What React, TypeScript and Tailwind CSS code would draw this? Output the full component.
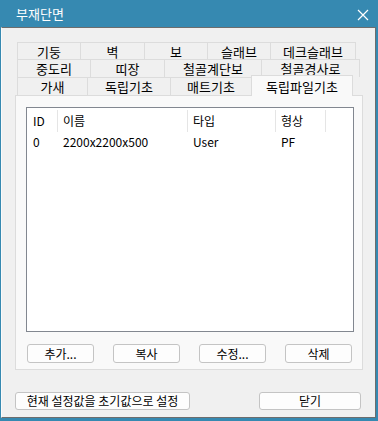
import React from 'react';

const font = { fontFamily: '"Noto Sans CJK KR", "Liberation Sans", sans-serif' };

const row1 = [
  { label: '기둥', w: 'w-[64px]' },
  { label: '벽', w: 'w-[65px]' },
  { label: '보', w: 'w-[64px]' },
  { label: '슬래브', w: 'w-[64px]' },
  { label: '데크슬래브', w: 'w-[86px]' },
];

const row2 = [
  { label: '중도리', w: 'w-[74px]' },
  { label: '띠장', w: 'w-[75px]' },
  { label: '철골계단보', w: 'w-[98px]' },
  { label: '철골경사로', w: 'w-[99px]' },
];

const row3 = [
  { label: '가새', w: 'w-[71px]' },
  { label: '독립기초', w: 'w-[84px]' },
  { label: '매트기초', w: 'w-[82px]' },
];

function Tab({ label, w, h = 'h-[18px]' }: { label: string; w: string; h?: string }) {
  return (
    <div
      className={`${w} ${h} shrink-0 flex items-center justify-center border-t border-l border-r border-[#dcdcdc] bg-[#f0f0f0] text-[13px] leading-none text-black -mr-[1px]`}
    >
      {label}
    </div>
  );
}

function Btn({ label, w, h = 'h-[19px]' }: { label: string; w: string; h?: string }) {
  return (
    <div
      className={`${w} ${h} flex items-center justify-center rounded-[3px] border border-[#c4c4c4] bg-[#fdfdfd] text-[12px] leading-none text-black`}
    >
      {label}
    </div>
  );
}

export default function App() {
  return (
    <div className="w-[378px] h-[421px] bg-[#3689b1] flex flex-col select-none" style={font}>
      {/* title bar */}
      <div className="h-[27px] shrink-0 flex items-center justify-between pl-[16px] pr-[9px]">
        <span className="text-[13px] text-white leading-none">부재단면</span>
        <svg width="12" height="12" viewBox="0 0 12 12" className="mt-[3px]">
          <path d="M1 1 L11 11 M11 1 L1 11" stroke="white" strokeWidth="1.2" />
        </svg>
      </div>

      {/* client area */}
      <div className="flex-1 ml-[1px] mr-[2px] mb-[3px] bg-[#f0f0f0] border-t border-t-[#6d6d6d] border-r border-r-[#6d6d6d] border-b border-b-[#6d6d6d] border-l border-l-[#fafafa] flex flex-col">
        {/* tabs */}
        <div className="pt-[14px] pl-[13px] pr-[14px]">
          <div className="pl-[2px] flex">
            {row1.map((t) => (
              <Tab key={t.label} label={t.label} w={t.w} h="h-[17px]" />
            ))}
          </div>
          <div className="pl-[2px] flex">
            {row2.map((t) => (
              <Tab key={t.label} label={t.label} w={t.w} />
            ))}
          </div>
          <div className="pl-[2px] flex items-end h-[18px] relative">
            {row3.map((t) => (
              <Tab key={t.label} label={t.label} w={t.w} />
            ))}
            <div className="relative z-10 w-[102px] h-[21px] -mb-[1px] shrink-0 flex items-center justify-center border-t border-l border-r border-[#dcdcdc] bg-[#f9f9f9] text-[13px] leading-none text-black">
              독립파일기초
            </div>
          </div>

          {/* panel */}
          <div className="h-[275px] w-[348px] bg-[#f9f9f9] border border-[#dcdcdc] pt-[11px] pl-[10px] flex flex-col">
            <div className="w-[328px] h-[225px] bg-white border border-[#828790] text-[12px] leading-none text-black">
              <div className="h-[26px] flex items-center">
                <div className="w-[31px] pl-[6px] h-[22px] flex items-center border-r border-[#e5e5e5]">ID</div>
                <div className="w-[130px] pl-[5px] h-[22px] flex items-center border-r border-[#e5e5e5]">이름</div>
                <div className="w-[88px] pl-[5px] h-[22px] flex items-center border-r border-[#e5e5e5]">타입</div>
                <div className="w-[50px] pl-[5px] h-[22px] flex items-center border-r border-[#e5e5e5]">형상</div>
              </div>
              <div className="h-[16px] flex items-center">
                <div className="w-[31px] pl-[6px]">0</div>
                <div className="w-[130px] pl-[5px]">2200x2200x500</div>
                <div className="w-[88px] pl-[5px]">User</div>
                <div className="w-[50px] pl-[5px]">PF</div>
              </div>
            </div>

            <div className="mt-[12px] flex gap-[19px] pl-[1px]">
              <Btn label="추가..." w="w-[67px]" />
              <Btn label="복사" w="w-[67px]" />
              <Btn label="수정..." w="w-[67px]" />
              <Btn label="삭제" w="w-[67px]" />
            </div>
          </div>
        </div>

        {/* bottom buttons */}
        <div className="mt-[22px] pl-[13px] pr-[14px] flex justify-between">
          <Btn label="현재 설정값을 초기값으로 설정" w="w-[175px]" h="h-[18px]" />
          <Btn label="닫기" w="w-[102px]" h="h-[18px]" />
        </div>
      </div>
    </div>
  );
}
